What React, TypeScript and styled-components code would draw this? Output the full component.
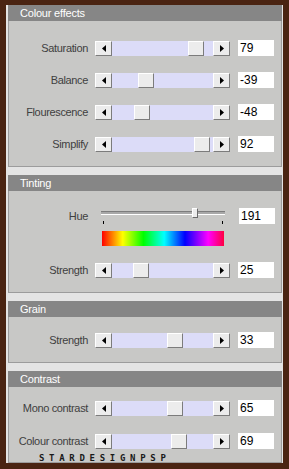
import { type ReactNode } from 'react'
import styled, { createGlobalStyle } from 'styled-components'

interface SliderRow {
  label: string
  value: number
  pos: number
}

const COLOUR_EFFECTS: SliderRow[] = [
  { label: 'Saturation', value: 79, pos: 0.895 },
  { label: 'Balance', value: -39, pos: 0.305 },
  { label: 'Flourescence', value: -48, pos: 0.26 },
  { label: 'Simplify', value: 92, pos: 0.96 },
]

const CONTRAST: SliderRow[] = [
  { label: 'Mono contrast', value: 65, pos: 0.65 },
  { label: 'Colour contrast', value: 69, pos: 0.69 },
]

const TRACK_TRAVEL = 85

const Arrow = ({ dir }: { dir: 'left' | 'right' }): ReactNode => (
  <svg width="4" height="7" viewBox="0 0 4 7">
    {dir === 'left' ? <path d="M4 0 L0 3.5 L4 7 Z" fill="#000" /> : <path d="M0 0 L4 3.5 L0 7 Z" fill="#000" />}
  </svg>
)

const ScrollSlider = ({ row }: { row: SliderRow }): ReactNode => (
  <Row>
    <Label>{row.label}</Label>
    <Scrollbar>
      <ArrowButton><Arrow dir="left" /></ArrowButton>
      <Track>
        <Thumb style={{ left: Math.round(row.pos * TRACK_TRAVEL) }} />
      </Track>
      <ArrowButton><Arrow dir="right" /></ArrowButton>
    </Scrollbar>
    <ValueBox>{row.value}</ValueBox>
  </Row>
)

const App = (): ReactNode => {
  return (
    <>
      <GlobalStyle />
      <Frame>
        <Inner>
          <Section>
            <Header>Colour effects</Header>
            <Body $pt={19} $pb={14} $gap={16}>
              {COLOUR_EFFECTS.map((r) => <ScrollSlider key={r.label} row={r} />)}
            </Body>
          </Section>

          <Section>
            <Header>Tinting</Header>
            <Body $pt={16} $pb={14} $gap={0}>
              <HueRow>
                <Label>Hue</Label>
                <HueSlider>
                  <Groove />
                  <HueThumb style={{ left: 91 }} />
                  <Ticks>
                    <Tick />
                    <Tick />
                  </Ticks>
                </HueSlider>
                <ValueBox>191</ValueBox>
              </HueRow>
              <Rainbow />
              <Spacer $h={16} />
              <ScrollSlider row={{ label: 'Strength', value: 25, pos: 0.25 }} />
            </Body>
          </Section>

          <Section>
            <Header>Grain</Header>
            <Body $pt={15} $pb={14} $gap={0}>
              <ScrollSlider row={{ label: 'Strength', value: 33, pos: 0.65 }} />
            </Body>
          </Section>

          <Section>
            <Header>Contrast</Header>
            <Body $pt={13} $pb={0} $gap={17}>
              {CONTRAST.map((r) => <ScrollSlider key={r.label} row={r} />)}
              <Watermark>STARDESIGNPSP</Watermark>
            </Body>
          </Section>
        </Inner>
      </Frame>
    </>
  )
}

export default App

const GlobalStyle = createGlobalStyle`
  html, body {
    margin: 0;
    padding: 0;
    background: #4a2412;
  }
`

const Frame = styled.div`
  width: 289px;
  height: 469px;
  box-sizing: border-box;
  padding: 5px 6px 6px 6px;
  background: #4a2412;
  font-family: "Liberation Sans", Arial, sans-serif;
`

const Inner = styled.div`
  height: 100%;
  box-sizing: border-box;
  background: #e4e4e4;
  padding: 0 1px 0 2px;
  display: flex;
  flex-direction: column;
  gap: 8px;
  overflow: hidden;
`

const Section = styled.div`
  display: flex;
  flex-direction: column;
`

const Header = styled.div`
  height: 16px;
  background: #868686;
  color: #fff;
  font-size: 11px;
  line-height: 16px;
  letter-spacing: -0.2px;
  padding-left: 12px;
`

const Body = styled.div<{ $pt: number; $pb: number; $gap: number }>`
  background: #c8c8c6;
  border: 1px solid #9c9c9c;
  border-top: none;
  padding: ${(p) => p.$pt}px 0 ${(p) => p.$pb}px 0;
  display: flex;
  flex-direction: column;
  gap: ${(p) => p.$gap}px;
`

const Row = styled.div`
  display: flex;
  align-items: center;
  height: 16px;
`

const Label = styled.div`
  width: 79px;
  flex-shrink: 0;
  text-align: right;
  font-size: 11px;
  letter-spacing: -0.35px;
  color: #404040;
  white-space: nowrap;
`

const Scrollbar = styled.div`
  margin-left: 7px;
  width: 135px;
  height: 15px;
  display: flex;
`

const ArrowButton = styled.div`
  width: 17px;
  height: 15px;
  box-sizing: border-box;
  background: #ececec;
  border: 1px solid;
  border-color: #ffffff #7c7c7c #7c7c7c #ffffff;
  display: flex;
  align-items: center;
  justify-content: center;
  flex-shrink: 0;
`

const Track = styled.div`
  position: relative;
  flex: 1;
  background: #dcdcf8;
`

const Thumb = styled.div`
  position: absolute;
  top: 0;
  width: 16px;
  height: 15px;
  box-sizing: border-box;
  background: #ececec;
  border: 1px solid;
  border-color: #ffffff #7c7c7c #7c7c7c #ffffff;
`

const ValueBox = styled.div`
  margin-left: 8px;
  width: 36px;
  height: 16px;
  box-sizing: border-box;
  background: #fff;
  color: #000;
  font-size: 12px;
  line-height: 16px;
  padding-left: 2px;
  flex-shrink: 0;
`

const HueRow = styled.div`
  display: flex;
  align-items: center;
  height: 18px;
`

const HueSlider = styled.div`
  position: relative;
  margin-left: 13px;
  width: 124px;
  height: 18px;
  margin-right: 6px;
  flex-shrink: 0;
`

const Groove = styled.div`
  position: absolute;
  left: 0;
  right: 0;
  top: 4px;
  height: 2px;
  border-top: 1px solid #7c7c7c;
  border-bottom: 1px solid #ffffff;
  background: #a8a8a8;
`

const HueThumb = styled.div`
  position: absolute;
  top: 1px;
  width: 4px;
  height: 8px;
  background: #ececec;
  border: 1px solid;
  border-color: #ffffff #6a6a6a #6a6a6a #ffffff;
`

const Ticks = styled.div`
  position: absolute;
  left: 2px;
  right: 2px;
  top: 14px;
  display: flex;
  justify-content: space-between;
`

const Tick = styled.div`
  width: 1px;
  height: 3px;
  background: #000;
`

const Rainbow = styled.div`
  margin-top: 6px;
  margin-left: 93px;
  width: 122px;
  height: 15px;
  background: linear-gradient(
    to right,
    #ff0000 0%,
    #ffff00 17%,
    #00ff00 34%,
    #00ffff 51%,
    #0000ff 68%,
    #ff00ff 87%,
    #ff0040 100%
  );
`

const Spacer = styled.div<{ $h: number }>`
  height: ${(p) => p.$h}px;
`

const Watermark = styled.div`
  margin-top: -12px;
  padding-left: 30px;
  height: 8px;
  font-family: "DejaVu Sans Mono", monospace;
  font-weight: bold;
  font-size: 9px;
  line-height: 8px;
  letter-spacing: 4.7px;
  color: #1a1a1a;
`
